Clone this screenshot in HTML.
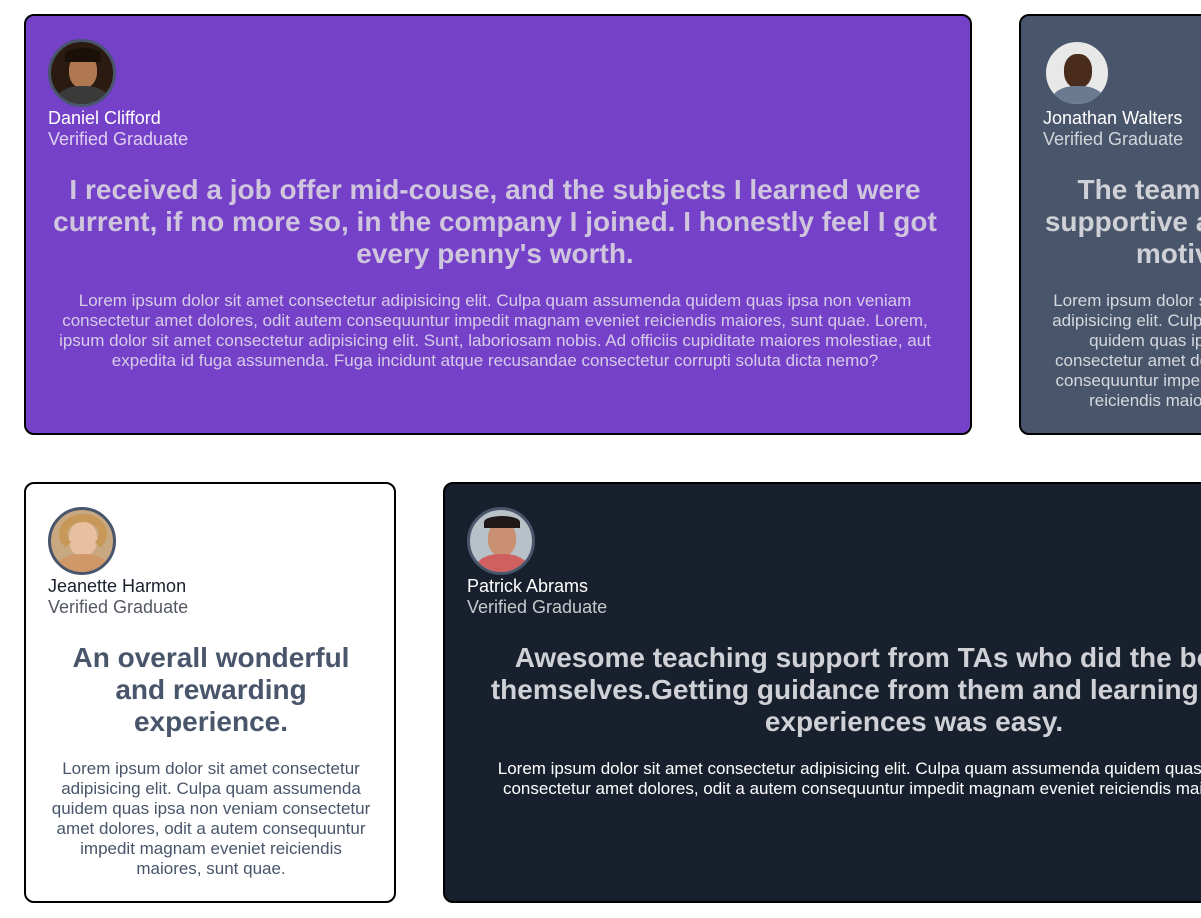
<!DOCTYPE html>
<html><head><meta charset="utf-8"><style>
*{box-sizing:border-box;margin:0;padding:0}
body{width:1201px;height:918px;overflow:hidden;background:#fff;font-family:"Liberation Sans",Arial,sans-serif;position:relative}
.card{position:absolute;border:2.5px solid #000;border-radius:10px;padding:23px 28px 0 22px;overflow:hidden}
.av{width:68px;height:68px;border-radius:50%;border:3px solid #48556a;overflow:hidden;position:relative}
.name{font-size:18px;line-height:21px;margin-top:1px;white-space:nowrap}
.role{font-size:18px;line-height:21px;opacity:.75;white-space:nowrap}
h2{font-size:28px;line-height:32px;text-align:center;font-weight:bold;margin-top:24px}
p{font-size:17px;line-height:20px;text-align:center;margin-top:21px}
.c1{left:24px;top:14px;width:948px;height:421px;background:#7541c8;color:#fff}
.c1 h2{color:#cfc6de}.c1 p{color:#d6cce8}
.c2{left:1019px;top:14px;width:372px;height:421px;background:#48556a;color:#fff}
.c2 h2{color:#cfd1d6}.c2 p{color:#d5d8de}
.c3{left:24px;top:482px;width:372px;height:421px;background:#fff;color:#19202d;padding-right:20px}
.c3 h2,.c3 p{color:#48556a}
.c4{left:443px;top:482px;width:948px;height:421px;background:#19202d;color:#fff}
.c4 h2{color:#cfd1d6}.c4 p{color:#fff}
.face{position:absolute;left:18px;top:12px;width:28px;height:34px;border-radius:45%}
.body{position:absolute;left:6px;top:44px;width:52px;height:30px;border-radius:45% 45% 0 0}
</style></head><body>
<div class="card c1">
<div class="av" style="background:#2a1a10"><div class="face" style="background:#b07850"></div><div class="body" style="background:#3a3a3a"></div><div style="position:absolute;left:14px;top:6px;width:36px;height:14px;border-radius:50% 50% 0 0;background:#1a1008"></div></div>
<div class="name">Daniel Clifford</div><div class="role">Verified Graduate</div>
<h2>I received a job offer mid-couse, and the subjects I learned were current, if no more so, in the company I joined. I honestly feel I got every penny's worth.</h2>
<p>Lorem ipsum dolor sit amet consectetur adipisicing elit. Culpa quam assumenda quidem quas ipsa non veniam consectetur amet dolores, odit autem consequuntur impedit magnam eveniet reiciendis maiores, sunt quae. Lorem, ipsum dolor sit amet consectetur adipisicing elit. Sunt, laboriosam nobis. Ad officiis cupiditate maiores molestiae, aut expedita id fuga assumenda. Fuga incidunt atque recusandae consectetur corrupti soluta dicta nemo?</p>
</div>
<div class="card c2">
<div class="av" style="border-color:#48556a;background:#e8e8e8"><div class="face" style="background:#4a2c1c"></div><div class="body" style="background:#6a7a90"></div></div>
<div class="name">Jonathan Walters</div><div class="role">Verified Graduate</div>
<h2>The team was very supportive and kept me motivated</h2>
<p>Lorem ipsum dolor sit amet consectetur adipisicing elit. Culpa quam assumenda quidem quas ipsa non veniam consectetur amet dolores, odit a autem consequuntur impedit magnam eveniet reiciendis maiores, sunt quae.</p>
</div>
<div class="card c3">
<div class="av" style="background:#c8a880"><div class="face" style="background:#e8c0a0"></div><div class="body" style="background:#d09868"></div><div style="position:absolute;left:8px;top:4px;width:48px;height:40px;border-radius:50%;border:8px solid #c89858;border-bottom-color:transparent"></div></div>
<div class="name">Jeanette Harmon</div><div class="role">Verified Graduate</div>
<h2>An overall wonderful and rewarding experience.</h2>
<p>Lorem ipsum dolor sit amet consectetur adipisicing elit. Culpa quam assumenda quidem quas ipsa non veniam consectetur amet dolores, odit a autem consequuntur impedit magnam eveniet reiciendis maiores, sunt quae.</p>
</div>
<div class="card c4">
<div class="av" style="background:#b8c0c8"><div class="face" style="background:#c89070"></div><div class="body" style="background:#d06060"></div><div style="position:absolute;left:14px;top:6px;width:36px;height:12px;border-radius:50% 50% 0 0;background:#201818"></div></div>
<div class="name">Patrick Abrams</div><div class="role">Verified Graduate</div>
<h2>Awesome teaching support from TAs who did the bootcamp themselves.Getting guidance from them and learning from their experiences was easy.</h2>
<p>Lorem ipsum dolor sit amet consectetur adipisicing elit. Culpa quam assumenda quidem quas ipsa non veniam consectetur amet dolores, odit a autem consequuntur impedit magnam eveniet reiciendis maiores, sunt quae.</p>
</div>
</body></html>
